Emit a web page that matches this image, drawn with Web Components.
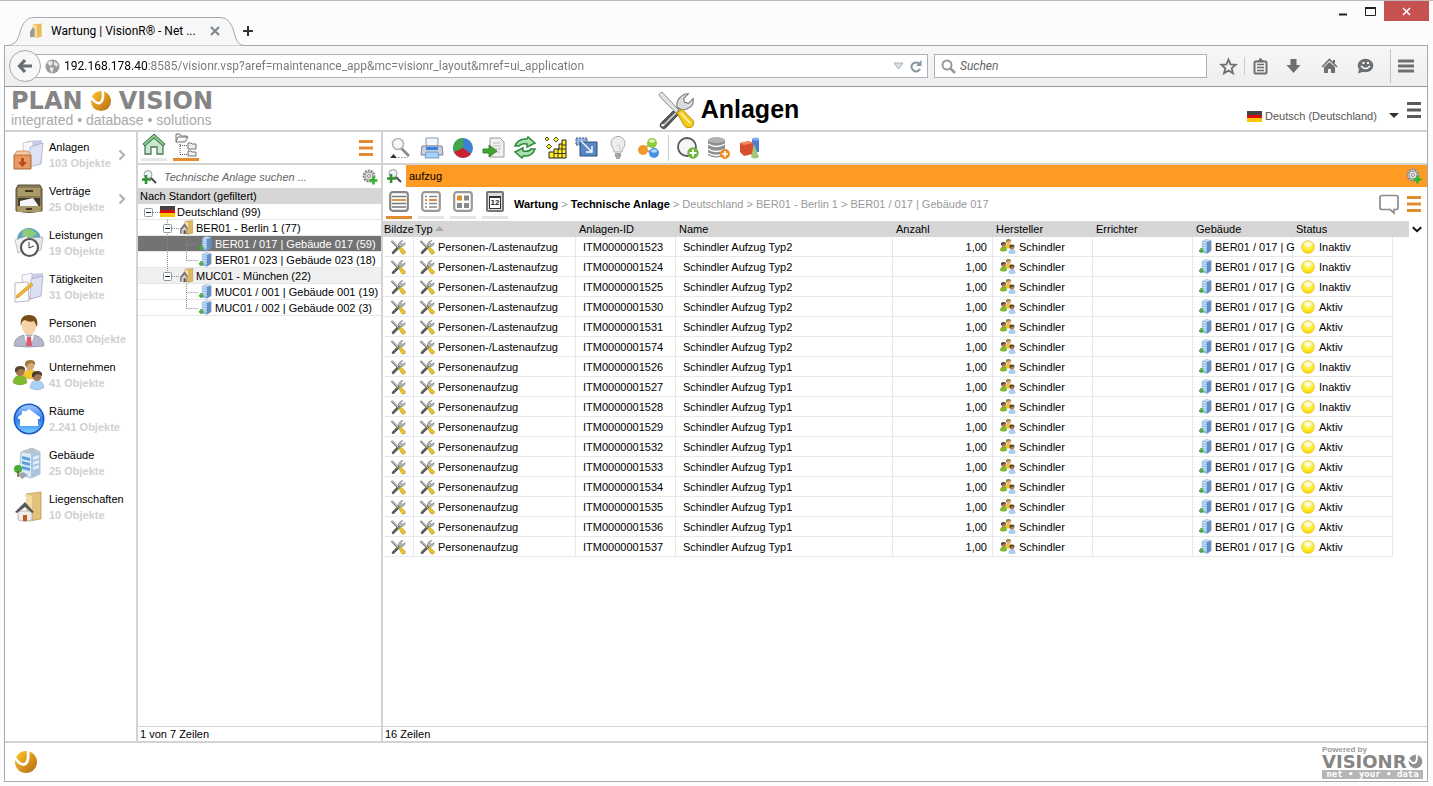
<!DOCTYPE html>
<html lang="de">
<head>
<meta charset="utf-8">
<title>Wartung | VisionR® - Net Your Data</title>
<style>
html, body { margin: 0; height: 100%; }
body { font: 11px/16px "Liberation Sans", Arial, sans-serif; color: #000; background: #fcfcfc; }
</style>
</head>
<body>
<browser-window>
  <app-header></app-header>
  <app-workspace>
    <app-nav></app-nav>
    <tree-panel></tree-panel>
    <asset-panel></asset-panel>
  </app-workspace>
  <app-footer></app-footer>
</browser-window>

<script>
const TOOLS = `
<path d="M23 17 5 35q-2 3 1 5 3 2 5-1l17-18z" fill="#59595b" stroke="#333" stroke-width=".8"/><path d="M8 37 25 20" stroke="#ddd" stroke-width="1.6"/><circle cx="7" cy="37" r="1.4" fill="#fff"/>
<path d="M22 18q-1-6 3-10 4-4 9-4l-5 5 1 4 4 1 5-5q1 6-3 9t-9 3z" fill="#d9dbdd" stroke="#777" stroke-width="1.1"/>
<path d="M3 5 6 2l4 4 14 15-3 3L6 9z" fill="#e2e3e5" stroke="#858585"/>
<path d="m22 24 5-4 12 12q2 5-2 7-4 2-7-1z" fill="#f5c91d" stroke="#b98a0a"/><path d="m26 24 10 11" stroke="#fff3a0" stroke-width="2"/>`;
const MINITOOLS = `<path d="M8 36 27 17" stroke="#5c5c5e" stroke-width="7" stroke-linecap="round"/><path d="M22 18q-1-6 3-10 4-4 9-4l-5 5 1 4 4 1 5-5q1 6-3 9t-9 3z" fill="#b4b7ba" stroke="#777" stroke-width="1.500"/><path d="M4 5 22 23" stroke="#7a7a7a" stroke-width="5.500"/><path d="M5 5 22 22" stroke="#d5d7d9" stroke-width="2"/><path d="m23 24 4-4 13 13q1 4-2 6-4 2-7-1z" fill="#eac42a" stroke="#a8820f" stroke-width="1.500"/>`;
const BUILDING = `
<path d="m8 5 11-4 8 4v22l-9 4-12-4z" fill="#d7ebf9" stroke="#8fa6b8" stroke-width=".7"/><path d="m18 7 9-2v22l-9 4z" fill="#a9c4dd"/>
<path d="m9 9 8 2v3l-8-2zm0 5 8 2v3l-8-2zm0 5 8 2v3l-8-2z" fill="#5f9ddb"/><path d="m20 10 6-2v3l-6 2zm0 5 6-2v3l-6 2zm0 5 6-2v3l-6 2z" fill="#e0effc"/><path d="M8 5l10 2 9-2-8-4z" fill="#b9c3cb"/>
<path d="m5 28 5-3 5 3-6 4z" fill="#9aa7ad"/><circle cx="5" cy="22" r="4" fill="#47ad35"/><path d="M5 24v6" stroke="#7d582b" stroke-width="1.5"/>`;
const person = (x, y, body, hair, skin) => `<g transform="translate(${x} ${y})"><path d="M0 17q0-7 7-8 7 1 7 8-7 4-14 0z" fill="${body}" stroke="#0003" stroke-width=".6"/><circle cx="7" cy="5.500" r="4.500" fill="${skin}"/><path d="M2 6q-1-6 5-6t5 5l-3-2q-4 0-5 3z" fill="${hair}"/></g>`;
const PEOPLE = person(10, 0, '#f0c62b', '#9b7a3a', '#d9a878') + person(0, 6, '#7dbb2c', '#5a4432', '#a77550') + person(17, 11, '#a9d1f5', '#4a3c32', '#a5765a');
const SMALL_BUILDING = `<path d="m9 5 8-4 11 2v22l-9 6-10-3z" fill="#8dbbe8" stroke="#7f9fbd" stroke-width=".8"/><path d="m19 6 9-3v22l-9 6z" fill="#658fc0"/><path d="m10 8 8 1m-8 4 8 1m-8 4 8 1m-8 4 8 1" stroke="#d9ecfb" stroke-width="2.200"/><path d="m9 5 8-4 11 2-9 3z" fill="#c8d8e6"/><path d="M7 19v11M2 25h10" stroke="#48a838" stroke-width="4"/>`;
const BALL = `<defs><linearGradient id="o" x1="0" y1="0" x2="1" y2="1"><stop stop-color="#ffc62c"/><stop offset="1" stop-color="#b46a12"/></linearGradient></defs>`;
const HOUSE = `<path d="M13 3 28 1v27l-12 2z" fill="#e3c27c" stroke="#b48d45" stroke-width=".7"/><path d="m13 3 6 2v26l-6-3z" fill="#f2dba3"/><path d="M5 20h14v9q-7 3-14 0z" fill="#efeeec" stroke="#999" stroke-width=".6"/><path d="m2 21 10-10 9 10-2 1-7-6-8 6z" fill="#595959"/><path d="M10 24h4v6h-4z" fill="#c65a22"/>`;

/* name: [width, height, viewBox, drawing] */
const ICONS = {
  tools: [40, 40, '0 0 42 42', TOOLS],
  minitools: [16, 16, '0 0 42 42', MINITOOLS],
  building: [15, 15, '0 0 32 32', BUILDING],
  minibuilding: [15, 15, '0 0 32 32', SMALL_BUILDING],
  people: [16, 15, '0 0 32 30', PEOPLE],
  house: [15, 15, '0 0 32 32', HOUSE],
  minihouse: [15, 15, '0 0 32 32', '<path d="M12 3 29 1v27l-12 3z" fill="#dcb865" stroke="#a98441"/><path d="m12 3 7 3v25l-7-3z" fill="#f5e0ae"/><path d="m2 29 1-11 9-11 6 9v14z" fill="#77716b"/><path d="m5 29 1-9 6-6 4 5v10z" fill="#d8d3cd"/><path d="M10 22h4v8h-4z" fill="#6b4a33"/>'],
  flag: [15, 11, '0 0 15 11', '<path d="M0 0h15v4H0z" fill="#444"/><path d="M0 4h15v3H0z" fill="#d80c0c"/><path d="M0 7h15v4H0z" fill="#f8c50a"/>'],
  orb: [24, 24, '0 0 24 24', BALL + '<circle cx="12" cy="12" r="11" fill="url(#o)"/><path d="M1 8q6 8 10 6 4-2 3-13" fill="none" stroke="#fff" stroke-width="2.800"/>'],
  orbgray: [20, 20, '0 0 24 24', '<circle cx="12" cy="12" r="11" fill="#929292"/><path d="M1 8q6 8 10 6 4-2 3-13" fill="none" stroke="#fff" stroke-width="3"/>'],
  status: [14, 14, '0 0 14 14', '<defs><radialGradient id="s" cx=".5" cy=".3" r=".75"><stop stop-color="#fffde0"/><stop offset=".5" stop-color="#ffee3a"/><stop offset=".8" stop-color="#ffe100"/><stop offset="1" stop-color="#e8b400"/></radialGradient></defs><circle cx="7" cy="7" r="6.300" fill="url(#s)" stroke="#e0b030" stroke-width=".6"/><ellipse cx="7" cy="4" rx="3.600" ry="2" fill="#fff" opacity=".6"/>'],
  favicon: [15, 16, '0 0 32 32', '<path d="M8 2 27 0v28l-15 3z" fill="#e6bd58"/><path d="m8 2 9 3v27l-9-4z" fill="#f4dc9c"/><path d="M2 18 8 8l4 4v16l-9 2z" fill="#9b9a94"/>'],
  tabclose: [10, 10, '0 0 10 10', '<path d="m1 1 8 8m0-8L1 9" stroke="#7e8890" stroke-width="2.200"/>'],
  plus: [12, 12, '0 0 12 12', '<path d="M6 1v10M1 6h10" stroke="#333" stroke-width="2"/>'],
  back: [16, 16, '0 0 16 16', '<path d="M8 2 2.500 8 8 14M2 8h13" fill="none" stroke="#696e72" stroke-width="3.200"/>'],
  globe: [15, 15, '0 0 15 15', '<circle cx="7.500" cy="7.500" r="7" fill="#9a9a9a"/><path d="M2 4q3-3 5-2l1 3-3 2zM9 2l4 3-1 3-3-2zM5 8l4 1-2 5q-3-3-2-6z" fill="#e6e6e6"/>'],
  drop: [11, 8, '0 0 11 8', '<path d="M1 1h9L5.500 7z" fill="#d9dfe4" stroke="#aab5bd"/>'],
  reload: [12, 13, '0 0 12 13', '<path d="M10 9a4.500 4.500 0 1 1-1-5.500" fill="none" stroke="#8795a1" stroke-width="2"/><path d="M11.500 0v6H6z" fill="#8795a1"/>'],
  lens: [15, 15, '0 0 15 15', '<circle cx="6" cy="6" r="4.500" fill="none" stroke="#999" stroke-width="2"/><path d="m9 9 5 5" stroke="#999" stroke-width="2.500"/>'],
  star: [17, 17, '0 0 17 17', '<path d="m8.500 1.500 2 4.800 5.200.5-4 3.400 1.300 5.100-4.500-2.800L4 15.300l1.300-5.100-4-3.400 5.200-.5z" fill="none" stroke="#6d7072" stroke-width="1.800"/>'],
  clip: [15, 17, '0 0 15 17', '<rect x="1.500" y="3.500" width="12" height="12" rx="1" fill="none" stroke="#6d7072" stroke-width="2"/><path d="M4.500 3V2H6V.5h3V2h1.500v1z" fill="#6d7072"/><path d="M4 6.500h7M4 9.500h7M4 12.500h7" stroke="#6d7072" stroke-width="1.300"/>'],
  down: [15, 16, '0 0 15 16', '<path d="M4.500 1h6v6h4l-7 8-7-8h4z" fill="#6d7072"/>'],
  home: [17, 16, '0 0 17 16', '<path d="M1 9 8.500 1.500 16 9" fill="none" stroke="#6d7072" stroke-width="1.600"/><path d="m3 9 5.500-5L14 9v6h-4v-4H7v4H3zm9-7h2v3h-2z" fill="#6d7072"/>'],
  smile: [17, 16, '0 0 17 16', '<ellipse cx="8.500" cy="7.500" rx="7.800" ry="6.800" fill="#6d7072"/><path d="m2 11-1 4.500 6-2z" fill="#6d7072"/><path d="M4 8q4.500 5 9 0" fill="none" stroke="#fff" stroke-width="1.500"/><path d="M5.500 5h2M10 5h2" stroke="#fff" stroke-width="1.800"/>'],
  menu: [16, 14, '0 0 16 14', '<path d="M0 2h16M0 7h16M0 12h16" stroke="#6d7072" stroke-width="3"/>'],
  menudark: [14, 16, '0 0 14 16', '<path d="M0 1.500h14M0 8h14M0 14.500h14" stroke="#5a5a5a" stroke-width="3"/>'],
  menuorange: [14, 16, '0 0 14 16', '<path d="M0 1.500h14M0 8h14M0 14.500h14" stroke="#e28b31" stroke-width="3"/>'],
  caret: [10, 6, '0 0 10 6', '<path d="M0 0h10L5 5z" fill="#333"/>'],
  min: [9, 9, '0 0 9 9', '<path d="M0 7.500h8" stroke="#222" stroke-width="2"/>'],
  max: [11, 9, '0 0 11 9', '<path d="M.5 1h10v7.500H.5z" fill="none" stroke="#222"/><path d="M0 1h11" stroke="#222" stroke-width="2"/>'],
  close: [9, 9, '0 0 9 9', '<path d="m1 1 7 7m0-7L1 8" stroke="#fff" stroke-width="1.600"/>'],
  chevron: [8, 14, '0 0 8 14', '<path d="m1.500 2.500 4.500 4.500-4.500 4.500" fill="none" stroke="#b5b5b5" stroke-width="2.400"/>'],
  chevdown: [10, 7, '0 0 10 7', '<path d="m.8 1.200 4.200 4 4.200-4" fill="none" stroke="#111" stroke-width="2"/>'],
  sort: [9, 5, '0 0 9 5', '<path d="M0 5 4.500 0 9 5z" fill="#aaa"/>'],
  assets: [32, 32, '0 0 32 32', '<path d="m14 2 15-1v22l-13 5z" fill="#c9cde6"/><path d="m10 4 10-2v23l-9 3z" fill="#f7f8fd" stroke="#aab" stroke-width=".6"/><path d="m17 8 13-4-2 21-12 3z" fill="#dfe2f2" stroke="#a3a6bd" stroke-width=".7"/><path d="M1 16h17v14H1z" fill="#e79a63" stroke="#a9663a"/><path d="m1 16 3-4h11l3 4z" fill="#f5c79d" stroke="#b77849" stroke-width=".7"/><path d="M8 19h3v4h3l-4.500 5L5 23h3z" fill="#bf4a1b"/>'],
  cabinet: [32, 32, '0 0 32 32', '<path d="M5 2h22l2 4v22q-13 3-26 0V6z" fill="#8b7c55" stroke="#5b5036"/><path d="M5 5h22v8H5z" fill="#a99a6a"/><path d="M5 15h22v11H5z" fill="#453d2b"/><path d="m7 18 13-3 5 7-1 3H7z" fill="#f4f6fb"/><path d="M4 23h24v6H4z" fill="#a89969"/><path d="M12 8h8M13 26h6" stroke="#42391f" stroke-width="2"/>'],
  services: [32, 32, '0 0 32 32', '<circle cx="16" cy="13" r="12" fill="#5fa3c8"/><path d="M10 3q8-3 14 4l-6 4-9-2z" fill="#8ecb74"/><path d="m2 13 12-4 5 12-14 5z" fill="#eef0f2" stroke="#a5aaae" stroke-width=".7"/><path d="m18 11 12-1-2 13-11 3z" fill="#e6e9ec" stroke="#a5aaae" stroke-width=".7"/><circle cx="16.500" cy="20.500" r="8.500" fill="#fff" stroke="#55585a" stroke-width="2.200"/><path d="M16 15v6l5-2" fill="none" stroke="#444"/>'],
  tasks: [32, 32, '0 0 32 32', '<path d="m15 3 15-1-2 23-12 4z" fill="#c9cde6"/><path d="m9 4 10-2v23l-8 3z" fill="#f7f8fd" stroke="#aab" stroke-width=".6"/><path d="m18 8 12-3-2 20-11 3z" fill="#dde0f1" stroke="#a3a6bd" stroke-width=".7"/><path d="m2 12 13-1 1 19-14 1z" fill="#fff" stroke="#aaa" stroke-width=".8"/><path d="m3 27 1-3 14-12 2 2L6 26z" fill="#f5b92e" stroke="#b57c18" stroke-width=".6"/>'],
  man: [32, 32, '0 0 32 32', '<path d="M1 31q0-9 10-11h10q10 2 10 11-15 2-30 0z" fill="#b5b7cd" stroke="#8889a5" stroke-width=".7"/><path d="m11 19 5 4 5-4-2 8h-6z" fill="#fff"/><path d="m14 22h4l1 9h-6z" fill="#e0566b"/><ellipse cx="16" cy="11" rx="7" ry="9" fill="#f7d2a5"/><path d="M8 12Q6 0 16 0t8 12l-3-6q-5 2-9-1-4 1-4 7z" fill="#7a4d16"/>'],
  nativepeople: [32, 32, '0 0 32 30', PEOPLE],
  rooms: [32, 32, '0 0 32 32', '<defs><linearGradient id="r" x2="0" y2="1"><stop stop-color="#a9cdfb"/><stop offset=".5" stop-color="#2e7af0"/><stop offset="1" stop-color="#7ed2ff"/></linearGradient></defs><circle cx="16" cy="16" r="14.700" fill="url(#r)" stroke="#1c5bc4" stroke-width="1.600"/><path d="M16 6 27 14v2h-2v7H7v-7H5v-2l4-3V8h3v1z" fill="#fff"/>'],
  greenhome: [24, 22, '0 0 24 22', '<path d="M3 12v9h6v-7h6v7h6v-9l-9-8z" fill="#c9e8ce" stroke="#4b7a55" stroke-width="1.300"/><path d="M1 11 12 1l11 10-2 2-9-8-9 8z" fill="#82c68c" stroke="#3c7047"/>'],
  folders: [22, 24, '0 0 22 24', '<path d="M1 9V1h4l1 2h6v2M1 9l2-5h10l-3 5z" fill="#ededed" stroke="#777"/><path d="M5 11v10.500M5 12.500h8M5 21.500h8" stroke="#555" stroke-dasharray="1 1"/><path d="M13 10h3l1 1h4v5h-8zm0 8h3l1 1h4v4h-8z" fill="#eee" stroke="#777"/>'],
  findplus: [16, 16, '0 0 16 16', '<circle cx="7" cy="5.500" r="4" fill="#eef" stroke="#999"/><path d="m10 9 5 5" stroke="#444" stroke-width="1.800"/><path d="M5 6v9M1 10.500h9" stroke="#2f9333" stroke-width="2.600"/>'],
  gearplus: [16, 16, '0 0 16 16', '<circle cx="7" cy="7" r="5.500" fill="#ddd" stroke="#8b8b8b" stroke-width="2" stroke-dasharray="2 1"/><circle cx="7" cy="7" r="4" fill="#e4e4e4" stroke="#999"/><circle cx="7" cy="7" r="1.500" fill="#fff" stroke="#888"/><path d="M11.500 7.500v8M7.500 11.500h8" stroke="#35b52d" stroke-width="2.600"/>'],
  find: [24, 24, '0 0 24 24', '<path d="m12 12 8 8" stroke="#8a8a8a" stroke-width="2.600"/><circle cx="9" cy="8" r="5.500" fill="#f6f8fa" stroke="#b3b7ba" stroke-width="1.600"/><path d="M1 22h7l-3.500-4z" fill="#333"/><path d="M9 21.500h10" stroke="#aaa" stroke-dasharray="2 1"/>'],
  print: [24, 24, '0 0 24 24', '<path d="M6 2h12v8H6z" fill="#f4f8fd" stroke="#8c98a6"/><path d="M2 10h20l1 9H1z" fill="#c9d1db" stroke="#7c8896"/><path d="M6 11h12v3H6z" fill="#3684df"/><path d="M6 16h12l1 6H5z" fill="#a9d2fa" stroke="#5a83ae" stroke-width=".7"/>'],
  pie: [24, 24, '0 0 24 24', '<circle cx="12" cy="12" r="10" fill="#3d81d5"/><path d="M12 12V2a10 10 0 0 0-9 14z" fill="#42a844"/><path d="m12 12-9 4a10 10 0 0 0 17 2z" fill="#c8232a"/>'],
  exportdoc: [24, 24, '0 0 24 24', '<path d="M8 2h10l4 4v15H8z" fill="#f1f1f1" stroke="#999"/><path d="M11 7h7m-7 3h8m-8 3h8m-8 3h7" stroke="#bbb"/><path d="M1 13h6V9l8 6-8 6v-4H1z" fill="#42a62e" stroke="#2a751c" stroke-width=".8"/>'],
  refresh: [24, 24, '0 0 24 24', '<path d="M2 10q3-8 12-7l1-2 7 6-8 4v-3Q8 7 6 10zm20 3q-3 8-12 7l-1 2-7-6 8-4v3q6 1 8-2z" fill="#a9dfae" stroke="#2d8b3b" stroke-width="1.500"/>'],
  stairs: [24, 24, '0 0 24 24', '<path d="M5 22v-6h5v-3h5V8h3V4h4v18z" fill="#ffee22" stroke="#222"/><path d="M10 16v6m4-9v9m4-14v14M10 17.500h12m-8-4.500h8m-4-4h4" stroke="#222" stroke-width=".9"/><path d="m5 8 2.500 2.500L5 13l-2.500-2.500zM12 1l2.500 2.500L12 6 9.500 3.500zM3 1l2 2-2 2-2-2z" fill="#ffee22" stroke="#222" stroke-width=".8"/>'],
  resize: [24, 24, '0 0 24 24', '<path d="M1 2h11v7H1z" fill="#8fb4e0" stroke="#34577f" stroke-dasharray="2 1"/><path d="M5 6h17v14H5z" fill="#5787c4" stroke="#2b4c7b"/><path d="m6 5 10 10m1-5v6h-6" stroke="#fff" stroke-width="1.400" fill="none"/>'],
  bulb: [24, 24, '0 0 24 24', '<path d="M8 16q0-3-2-5a7 7 0 1 1 12 0q-2 2-2 5z" fill="#eee" stroke="#aaa"/><path d="M9 18h6m-6 2h6m-5 2h4" stroke="#888" stroke-width="1.500"/><path d="M10 9q2 2 4 0v7" fill="none" stroke="#ccc"/>'],
  balls: [24, 24, '0 0 24 24', '<path d="M6 13 15 7l3 11z" fill="none" stroke="#aaa" stroke-width="2"/><circle cx="15" cy="7" r="5" fill="#8fca3d"/><circle cx="6" cy="14" r="5" fill="#f19a2b"/><circle cx="17" cy="17" r="5" fill="#4a90e2"/><ellipse cx="15" cy="5" rx="3" ry="1.700" fill="#dff4bd"/><ellipse cx="17" cy="15" rx="3" ry="1.700" fill="#b8d8ff"/>'],
  zoomplus: [24, 24, '0 0 24 24', '<circle cx="11" cy="11" r="9" fill="#f5f7f7" stroke="#565a5c" stroke-width="1.800"/><circle cx="17" cy="17" r="5.700" fill="#6db63a"/><path d="M17 13.500v7M13.500 17h7" stroke="#fff" stroke-width="2"/>'],
  database: [24, 24, '0 0 24 24', '<path d="M1 4v15q8 5 17 0V4z" fill="#8d8f91"/><ellipse cx="9.500" cy="4" rx="8.500" ry="3" fill="#b1b3b5"/><path d="M1 8q8 5 17 0M1 13q8 5 17 0M1 17q8 5 17 0" fill="none" stroke="#fff" stroke-width="1.300"/><circle cx="18" cy="18" r="5" fill="#ec8b23"/><path d="M18 15v6m-3-3h6" stroke="#fff" stroke-width="1.700"/>'],
  shapes: [24, 24, '0 0 24 24', '<path d="M14 3h7v13h-7z" fill="#4b7dd8"/><ellipse cx="17.500" cy="3" rx="3.500" ry="1.500" fill="#86aced"/><path d="m2 7 9-2 4 2v11l-9 2-4-4z" fill="#d9512c"/><path d="m2 7 9-2 4 2-9 2z" fill="#f08b60"/><path d="m16 8 5 13q-4 3-8 0z" fill="#a2c77b"/>'],
  viewlist: [20, 21, '0 0 20 21', '<rect x="1.200" y="1.200" width="17.600" height="18.600" rx="2.500" fill="#fff" stroke="#878787" stroke-width="2.200"/><path d="M3 5.500h14M3 12.500h14M3 16h14" stroke="#777" stroke-width="1.600"/><path d="M3 9h14" stroke="#e28b31" stroke-width="1.800"/>'],
  viewdetail: [20, 21, '0 0 20 21', '<rect x="1.200" y="1.200" width="17.600" height="18.600" rx="2.500" fill="#fff" stroke="#999" stroke-width="2.200"/><path d="M4 5.500h2M4 12.500h2M4 16h2m2-10.500h8M8 12.500h8M8 16h8" stroke="#888" stroke-width="1.700"/><path d="M4 9h2m2 0h8" stroke="#e28b31" stroke-width="1.800"/>'],
  viewtiles: [20, 21, '0 0 20 21', '<rect x="1.200" y="1.200" width="17.600" height="18.600" rx="2.500" fill="#fff" stroke="#999" stroke-width="2.200"/><path d="M4 4.500h5v5H4z" fill="#e28b31"/><path d="M11 4.500h5v5h-5zM4 12h5v5H4zm7 0h5v5h-5z" fill="#888"/>'],
  comment: [20, 21, '0 0 20 21', '<path d="M3 1.500h14q2 0 2 2v10q0 2-2 2h-2V19l-4-3.500H3q-2 0-2-2v-10q0-2 2-2z" fill="#fff" stroke="#8b8b8b" stroke-width="1.700"/>'],
};

const esc = s => s.replace(/&/g, '&amp;');
function define(name, css, html) {
  customElements.define(name, class extends HTMLElement {
    constructor() {
      super();
      this.attachShadow({ mode: 'open' });
    }
    connectedCallback() {
      const markup = typeof html === 'function' ? html(this) : html;
      this.shadowRoot.innerHTML = `<style>*{box-sizing:border-box}button,input,select{font:inherit;color:inherit;margin:0;padding:0;border:0;background:none;border-radius:0;outline:0}button{display:flex;align-items:center;justify-content:center}a{color:inherit;text-decoration:none}${css}</style>${markup}`;
    }
  });
}

define('ui-icon', ':host{display:inline-flex;flex:none}svg{display:block;overflow:visible}', el => {
  const [w, h, box, art] = ICONS[el.getAttribute('name')];
  return `<svg aria-hidden="true" fill-rule="evenodd" width="${el.getAttribute('w') || w}" height="${el.getAttribute('h') || h}" viewBox="${box}">${art}</svg>`;
});

define('browser-window', `
:host{display:flex;flex-direction:column;min-height:100vh;box-sizing:border-box;border-top:1px solid #bbb;padding-bottom:4px;background:#fcfcfc}
.chrome{font:12px/18px Roboto,"Noto Sans",sans-serif}
.title{display:flex;height:44px;align-items:flex-start}
.tab{position:relative;display:flex;align-items:center;gap:7px;width:242px;height:28px;margin-top:16px;padding-left:29px}
.tab svg{position:absolute;left:4px;top:0;z-index:0}
.tab ui-icon,.tab span,.tab button{position:relative}
.tab span{width:152px;white-space:nowrap}
.new{height:28px;margin-top:16px}
.win{display:flex;margin-left:auto;margin-right:4px}
.win button{width:27px;height:20px}
.win .x{width:45px;background:#c75050}
.bar{display:flex;align-items:center;height:42px;margin:0 5px 0 4px;padding:0 13px 0 4px;border:1px solid #a5aab0;border-bottom-color:#999;background:linear-gradient(#f7f7f7,#eee)}
.back{position:relative;z-index:1;width:32px;height:32px;border:1px solid #a5aaad;border-radius:50%;background:#f7f7f7;flex:none}
.field{display:flex;align-items:center;height:24px;border:1px solid #a9b2ba;background:#fff}
.url{flex:1;margin-left:-10px;padding:0 5px 0 13px;gap:4px}
.url input{flex:1;min-width:0;height:22px;color:#777;background:linear-gradient(90deg,#000 83px,#777 83px);-webkit-background-clip:text;background-clip:text;-webkit-text-fill-color:transparent}
.url .go{margin-left:2px}
.search{width:273px;margin-left:6px;padding:0 6px;gap:4px}
.search input{flex:1;min-width:0;height:22px;font-style:italic}
.search input::placeholder{color:#666;opacity:1}
.acts{display:flex;align-items:center;margin-left:12px}
.acts button{width:36px;height:30px}
.acts .star{width:18px;margin-right:7px}
.acts .clip{width:30px}
.sep{width:1px;height:18px;background:#ccc}
.sep.tall{height:34px;margin:0 7px;background:#c3c7cb}
.acts .menu{width:16px}
.page{flex:1;display:flex;flex-direction:column;margin:0 5px 0 4px;border:1px solid #a5aab0;border-top:0;background:#fff}
`, `
<div class="chrome">
  <div class="title">
    <div class="tab">
      <svg width="240" height="29" viewBox="0 0 240 29"><path d="M0 28.500h3q9 0 12-10Q19 .5 29 .5h188q10 0 14 18 2 10 10 10" fill="#f7f7f7" stroke="#a5aab0"/></svg>
      <ui-icon name="favicon"></ui-icon><span>Wartung | VisionR® - Net ...</span><button aria-label="Tab schließen"><ui-icon name="tabclose"></ui-icon></button>
    </div>
    <button class="new" aria-label="Neuer Tab"><ui-icon name="plus"></ui-icon></button>
    <div class="win"><button aria-label="Minimieren"><ui-icon name="min"></ui-icon></button><button aria-label="Maximieren"><ui-icon name="max"></ui-icon></button><button class="x" aria-label="Schließen"><ui-icon name="close"></ui-icon></button></div>
  </div>
  <div class="bar">
    <button class="back" aria-label="Zurück"><ui-icon name="back"></ui-icon></button>
    <div class="field url"><ui-icon name="globe"></ui-icon><input aria-label="Adresse" value="${esc('192.168.178.40:8585/visionr.vsp?aref=maintenance_app&mc=visionr_layout&mref=ui_application')}"><ui-icon name="drop"></ui-icon><button class="go" aria-label="Neu laden"><ui-icon name="reload"></ui-icon></button></div>
    <div class="field search"><ui-icon name="lens"></ui-icon><input aria-label="Suchen" placeholder="Suchen"></div>
    <div class="acts">
      <button class="star" aria-label="Lesezeichen"><ui-icon name="star"></ui-icon></button><i class="sep"></i>
      <button class="clip" aria-label="Lesezeichenliste"><ui-icon name="clip"></ui-icon></button>
      <button aria-label="Downloads"><ui-icon name="down"></ui-icon></button><button aria-label="Startseite"><ui-icon name="home"></ui-icon></button><button aria-label="Chat"><ui-icon name="smile"></ui-icon></button>
      <i class="sep tall"></i><button class="menu" aria-label="Menü"><ui-icon name="menu"></ui-icon></button>
    </div>
  </div>
</div>
<div class="page"><slot></slot></div>`);

define('brand-logo', `
:host{display:block;color:#858585;padding-left:6px}
.name{display:flex;align-items:center;justify-content:space-between;width:202px;height:24px;font:bold 24px/24px "DejaVu Sans",sans-serif}
.tag{font-size:14px;line-height:14px;color:#aaa;white-space:nowrap}
`, `<div class="name"><span>PLAN</span><ui-icon name="orb" w="22" h="22"></ui-icon><span>VISION</span></div><div class="tag">integrated • database • solutions</div>`);

define('app-header', `
:host{display:grid;grid-template-columns:1fr auto 1fr;height:45px;box-sizing:border-box;border-bottom:2px solid #d3d3d3}
brand-logo{padding-top:2px}
h1{display:flex;align-items:center;gap:5px;margin:0;padding-left:23px;font-size:25px;line-height:45px}
.right{display:flex;justify-content:flex-end;align-items:flex-start;padding:15px 6px 0 0;color:#555}
label{display:flex;align-items:center;gap:3px;height:28px}
select{appearance:none;width:121px;height:20px}
ui-icon.caret{margin-right:8px}
`, `<brand-logo></brand-logo><h1><ui-icon name="tools"></ui-icon>Anlagen</h1>
<div class="right"><label><ui-icon name="flag"></ui-icon><select aria-label="Sprache"><option>Deutsch (Deutschland)</option></select><ui-icon class="caret" name="caret"></ui-icon></label><button aria-label="Menü"><ui-icon name="menudark"></ui-icon></button></div>`);

define('app-workspace', ':host{flex:1;display:grid;grid-template-columns:131px 247px 1fr;border-bottom:2px solid #d3d3d3;min-width:0}', '<slot></slot>');

define('nav-item', `
:host{display:block}
a{display:flex;align-items:center;height:44px;padding:0 10px 0 8px;gap:4px}
div{flex:1;white-space:nowrap}b{display:block;color:#d0d0d0}
`, el => `<a href="#"><ui-icon name="${el.getAttribute('icon')}" w="32" h="32"></ui-icon><div><slot></slot><b>${el.getAttribute('count')} Objekte</b></div>${el.hasAttribute('more') ? '<ui-icon name="chevron"></ui-icon>' : ''}</a>`);

define('app-nav', ':host{display:block;padding-top:1px}nav{display:block}', `<nav>
<nav-item icon="assets" count="103" more>Anlagen</nav-item>
<nav-item icon="cabinet" count="25" more>Verträge</nav-item>
<nav-item icon="services" count="19">Leistungen</nav-item>
<nav-item icon="tasks" count="31">Tätigkeiten</nav-item>
<nav-item icon="man" count="80.063">Personen</nav-item>
<nav-item icon="nativepeople" count="41">Unternehmen</nav-item>
<nav-item icon="rooms" count="2.241">Räume</nav-item>
<nav-item icon="building" count="25">Gebäude</nav-item>
<nav-item icon="house" count="10">Liegenschaften</nav-item></nav>`);

/* guides: one letter per level; b/m/n boxes, t tee, l corner, v line, space empty */
const GUIDES = {
  ' ': '',
  v: '<path d="M4.500 0v16"/>',
  t: '<path d="M4.500 0v16M4.500 8.500h11"/>',
  l: '<path d="M4.500 0v9M4.500 8.500h11"/>',
  b: '<path d="M9 8.500h7"/>',
  m: '<path d="M4.500 0v16M9 8.500h7"/>',
  n: '<path d="M4.500 0v4M9 8.500h7"/>',
};
define('tree-row', `
:host{display:block}
div{display:flex;align-items:center;height:16px;padding-left:6px;border-bottom:1px solid #e6e6e6;white-space:nowrap}
svg{flex:none;stroke:#888;stroke-dasharray:1 1}
svg rect,svg .m{stroke-dasharray:none}
ui-icon{width:15px;margin-right:2px}
:host([selected]) div{background:#737373;color:#fff}
:host([shaded]) div{background:#f0f0f0}
`, el => {
  const g = [...el.getAttribute('guides')];
  const cells = g.map((c, i) => `<svg width="${i < g.length - 1 ? 19 : 16}" height="16" aria-hidden="true">${GUIDES[c]}${'bmn'.includes(c) ? '<rect x=".5" y="4.500" width="8" height="8" rx="1" fill="#fff" stroke="#8a98a8"/><path class="m" d="M2 8.500h5" stroke="#222"/>' : ''}</svg>`).join('');
  return `<div>${cells}<ui-icon name="${el.getAttribute('icon')}"></ui-icon><span><slot></slot></span></div>`;
});

define('view-tab', `
:host{display:block}
button{flex-direction:column;justify-content:space-between;width:26px;height:28px;border-bottom:3px solid #e6e6e6}
:host([active]) button{border-color:#e28b31}
`, el => `<button aria-label="${el.getAttribute('label')}"><slot></slot></button>`);

define('tree-panel', `
:host{display:flex;flex-direction:column;border:solid #d3d3d3;border-width:0 2px;min-width:0}
.tabs{display:flex;gap:6px;height:33px;padding:1px 8px 0 3px;border-bottom:2px solid #d3d3d3}
.tabs>button{margin-left:auto}
.find{display:flex;align-items:center;height:23px;padding:0 3px;gap:7px}
.find input{flex:1;min-width:0;font-style:italic;height:20px}
.find input::placeholder{color:#666;opacity:1}
h2{margin:0;padding-left:2px;font-size:11px;line-height:16px;font-weight:400;background:#d6d6d6}
footer{margin-top:auto;border-top:1px solid #d3d3d3;line-height:14px;padding-left:2px}
`, `
<div class="tabs"><view-tab label="Start"><ui-icon name="greenhome"></ui-icon></view-tab><view-tab label="Baum" active><ui-icon name="folders"></ui-icon></view-tab><button aria-label="Menü"><ui-icon name="menuorange"></ui-icon></button></div>
<div class="find"><ui-icon name="findplus"></ui-icon><input aria-label="Technische Anlage suchen" placeholder="Technische Anlage suchen ..."><button aria-label="Filter"><ui-icon name="gearplus"></ui-icon></button></div>
<h2>Nach Standort (gefiltert)</h2>
<tree-row guides="b" icon="flag">Deutschland (99)</tree-row>
<tree-row guides=" m" icon="minihouse">BER01 - Berlin 1 (77)</tree-row>
<tree-row guides=" vt" icon="minibuilding" selected>BER01 / 017 | Gebäude 017 (59)</tree-row>
<tree-row guides=" vl" icon="minibuilding">BER01 / 023 | Gebäude 023 (18)</tree-row>
<tree-row guides=" n" icon="minihouse" shaded>MUC01 - München (22)</tree-row>
<tree-row guides="  t" icon="minibuilding">MUC01 / 001 | Gebäude 001 (19)</tree-row>
<tree-row guides="  l" icon="minibuilding">MUC01 / 002 | Gebäude 002 (3)</tree-row>
<footer>1 von 7 Zeilen</footer>`);

const ITEMS = [
  ...[['1523', 0], ['1524', 0], ['1525', 0], ['1530', 1], ['1531', 1], ['1574', 1]].map(([id, a]) => ['Personen-/Lastenaufzug', id, 'Typ2', a]),
  ...[['1526', 0], ['1527', 0], ['1528', 0], ['1529', 1], ['1532', 1], ['1533', 1], ['1534', 1], ['1535', 1], ['1536', 1], ['1537', 1]].map(([id, a]) => ['Personenaufzug', id, 'Typ1', a]),
];
define('data-grid', `
:host{display:grid;grid-template-columns:1fr 18px;align-items:start}
table{width:100%;table-layout:fixed;border-collapse:separate;border-spacing:0}
th{height:16px;padding:0 0 0 3px;background:#d6d6d6;font-weight:400;text-align:left;line-height:16px;white-space:nowrap}
th:first-child,th:nth-child(2){padding-left:1px}
th ui-icon{margin:0 0 3px 2px;vertical-align:middle}
td{height:20px;padding:0 0 0 7px;border:solid #e8e8e8;border-width:0 1px 1px 0;white-space:nowrap;line-height:16px}
td.n{text-align:right;padding-right:5px}
td:nth-child(2),td:nth-child(8){padding-left:5px}
td:nth-child(8) span{gap:2px}
td:last-child{border:0}
td span{display:flex;align-items:center;gap:3px}
.one{width:31px}.typ{width:162px}.std{width:100px}.end{width:16px}
button{width:16px;height:16px}
`, `<table><colgroup><col class="one"><col class="typ"><col class="std"><col><col class="std"><col class="std"><col class="std"><col class="std"><col class="std"><col class="end"></colgroup>
<thead><tr><th>Bildze</th><th>Typ<ui-icon name="sort"></ui-icon></th><th>Anlagen-ID</th><th>Name</th><th>Anzahl</th><th>Hersteller</th><th>Errichter</th><th>Gebäude</th><th>Status</th><th></th></tr></thead>
<tbody>${ITEMS.map(([typ, id, model, on]) => `<tr><td><span><ui-icon name="minitools"></ui-icon></span></td><td><span><ui-icon name="minitools"></ui-icon>${typ}</span></td><td>ITM000000${id}</td><td>Schindler Aufzug ${model}</td><td class="n">1,00</td><td><span><ui-icon name="people"></ui-icon>Schindler</span></td><td></td><td><span><ui-icon name="minibuilding"></ui-icon>BER01 / 017 | G</span></td><td><span><ui-icon name="status" w="16"></ui-icon>${on ? 'Aktiv' : 'Inaktiv'}</span></td><td></td></tr>`).join('')}</tbody></table>
<button aria-label="Spalten"><ui-icon name="chevdown"></ui-icon></button>`);

const tool = (icon, label) => `<button aria-label="${label}"><ui-icon name="${icon}"></ui-icon></button>`;
define('asset-panel', `
:host{display:flex;flex-direction:column;min-width:0}
.tools{display:flex;align-items:center;gap:7px;height:33px;padding-left:6px;border-bottom:2px solid #d3d3d3}
.tools i{width:1px;height:26px;background:#ccc}
.find{display:flex;align-items:center;height:22px;padding-left:3px}
.find label{display:flex;width:20px}
.find div{flex:1;display:flex;align-items:center;height:22px;padding:0 5px 0 3px;background:#ff9a22}
.find input{flex:1;height:20px}
.views{display:flex;align-items:center;gap:6px;height:34px;padding:0 6px 0 3px}
view-tab{margin-top:1px}
.views nav{flex:1;color:#999;white-space:nowrap}
.views nav a.main{color:#000;font-weight:700}
.views>button+button{margin-left:2px}
.cal{display:flex;flex-direction:column;width:18px;height:21px;border:2px solid #777;border-radius:2px;padding:3px 1px 1px;background:#ddd}
.cal b{flex:1;font-size:8px;line-height:10px;background:#fff;color:#222;text-align:center;border:solid #333;border-width:2px 1px 1px}
footer{margin-top:auto;border-top:1px solid #d3d3d3;line-height:14px;padding-left:2px}
`, `
<div class="tools">${tool('find', 'Suchen')}${tool('print', 'Drucken')}${tool('pie', 'Diagramm')}${tool('exportdoc', 'Export')}${tool('refresh', 'Aktualisieren')}${tool('stairs', 'Auswertung')}${tool('resize', 'Größe')}${tool('bulb', 'Hinweis')}${tool('balls', 'Beziehungen')}<i></i>${tool('zoomplus', 'Neue Suche')}${tool('database', 'Datenbank')}${tool('shapes', 'Objekte')}</div>
<div class="find"><label for="q"><ui-icon name="findplus"></ui-icon></label><div><input id="q" aria-label="Suche" value="aufzug"><button aria-label="Filter"><ui-icon name="gearplus"></ui-icon></button></div></div>
<div class="views">
<view-tab label="Liste" active><ui-icon name="viewlist"></ui-icon></view-tab><view-tab label="Details"><ui-icon name="viewdetail"></ui-icon></view-tab><view-tab label="Kacheln"><ui-icon name="viewtiles"></ui-icon></view-tab><view-tab label="Kalender"><span class="cal"><b>12</b></span></view-tab>
<nav><a class="main" href="#">Wartung</a> &gt; <a class="main" href="#">Technische Anlage</a> &gt; <a href="#">Deutschland</a> &gt; <a href="#">BER01 - Berlin 1</a> &gt; <a href="#">BER01 / 017 | Gebäude 017</a></nav>
<button aria-label="Kommentar"><ui-icon name="comment"></ui-icon></button><button aria-label="Menü"><ui-icon name="menuorange"></ui-icon></button></div>
<data-grid></data-grid>
<footer>16 Zeilen</footer>`);

define('app-footer', `
:host{display:flex;align-items:center;justify-content:space-between;height:38px;padding:0 4px 0 9px}
.vr{width:101px;color:#858585}
small{display:block;font:bold 8px/8px "Liberation Sans",sans-serif;color:#999}
.n{display:flex;justify-content:space-between;align-items:center;height:16px;font:bold 18px/16px "DejaVu Sans",sans-serif}
.d{height:9px;background:#b5b5b5;color:#fff;font:bold 9px/9px "DejaVu Sans Mono",monospace;text-align:center;white-space:nowrap}
`, `<ui-icon name="orb"></ui-icon><div class="vr"><small>Powered by</small><div class="n">VISIONR<ui-icon name="orbgray" w="15" h="15"></ui-icon></div><div class="d">net • your • data</div></div>`);
</script>
</body>
</html>
